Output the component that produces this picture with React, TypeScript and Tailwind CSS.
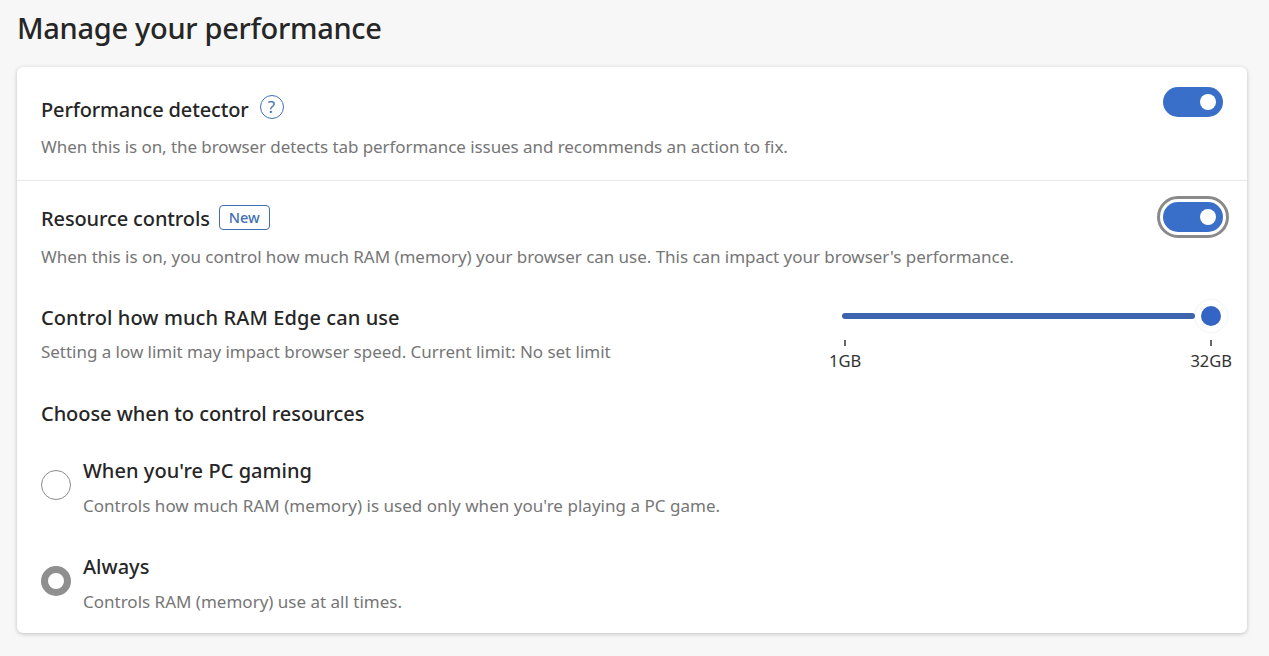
export default function App() {
  return (
    <div className="w-[1269px] h-[656px] overflow-hidden bg-[#f7f7f7] pl-[17px] pr-[22px] font-['Noto_Sans',sans-serif] text-[#262626]">
      <h1 className="h-[67px] pt-[8px] text-[29px] leading-[40px] font-medium tracking-[-0.3px]">Manage your performance</h1>

      <div className="h-[566px] rounded-[6px] bg-white shadow-[0_1px_4px_rgba(0,0,0,0.22)]">
        {/* Performance detector */}
        <div className="h-[114px] border-b border-[#e8e8e8] px-[24px] pt-[20px]">
          <div className="flex justify-between">
            <div className="flex items-center h-[46px] gap-[11px]">
              <span className="text-[20px] font-medium leading-[28px] tracking-[-0.15px]">Performance detector</span>
              <span className="flex h-[24px] w-[24px] mb-[7px] items-center justify-center rounded-full border-[1.5px] border-[#3f6fb5] text-[17px] leading-none text-[#3f6fb5]">?</span>
            </div>
            <Toggle />
          </div>
          <p className="mt-[2px] text-[17px] leading-[24px] tracking-[-0.07px] text-[#767676]">When this is on, the browser detects tab performance issues and recommends an action to fix.</p>
        </div>

        {/* Resource controls */}
        <div className="px-[24px] pt-[20px]">
          <div className="flex justify-between">
            <div className="flex items-center h-[36px] gap-[9px]">
              <span className="text-[20px] font-medium leading-[28px] tracking-[-0.12px]">Resource controls</span>
              <span className="mb-[4px] rounded-[4px] border border-[#3f6fb5] px-[9px] text-[14.5px] leading-[23px] font-medium text-[#3f6fb5]">New</span>
            </div>
            <div className="self-start rounded-full border-[3px] border-[#8a8a8a] p-[3px] -mr-[6px] -mt-[5px]">
              <Toggle />
            </div>
          </div>
          <p className="mt-[7px] text-[17px] leading-[24px] tracking-[-0.035px] text-[#767676]">When this is on, you control how much RAM (memory) your browser can use. This can impact your browser's performance.</p>
        </div>

        {/* RAM limit */}
        <div className="flex justify-between pl-[24px] pr-[15px] pt-[31px]">
          <div>
            <div className="text-[20px] font-medium leading-[36px] tracking-[0.1px]">Control how much RAM Edge can use</div>
            <p className="-mt-[1px] text-[17px] leading-[34px] tracking-[-0.03px] text-[#767676]">Setting a low limit may impact browser speed. Current limit: No set limit</p>
          </div>
          <Slider />
        </div>

        <div className="px-[24px] pt-[28px] text-[20px] font-medium leading-[28px] tracking-[-0.06px]">Choose when to control resources</div>

        <div className="flex gap-[12px] px-[24px] pt-[29px]">
          <span className="mt-[13px] h-[30px] w-[30px] shrink-0 rounded-full border border-[#8a8a8a]" />
          <div>
            <div className="text-[20px] font-medium leading-[28px] tracking-[0.05px]">When you're PC gaming</div>
            <p className="pt-[9px] text-[17px] leading-[24px] tracking-[0.03px] text-[#767676]">Controls how much RAM (memory) is used only when you're playing a PC game.</p>
          </div>
        </div>

        <div className="flex gap-[12px] px-[24px] pt-[35px]">
          <span className="mt-[13px] h-[30px] w-[30px] shrink-0 rounded-full border-[7.5px] border-[#8f8f8f]" />
          <div>
            <div className="text-[20px] font-medium leading-[28px]">Always</div>
            <p className="pt-[9px] text-[17px] leading-[24px] text-[#767676]">Controls RAM (memory) use at all times.</p>
          </div>
        </div>
      </div>
    </div>
  );
}

function Toggle() {
  return (
    <div className="flex h-[30px] w-[60px] items-center justify-end rounded-full bg-[#3a6fc9] pr-[7px]">
      <span className="h-[16px] w-[16px] rounded-full bg-white" />
    </div>
  );
}

function Slider() {
  return (
    <div className="w-[403px] -mt-[4px]">
      <div className="flex h-[40px] items-center pl-[13px] pr-[11px]">
        <div className="h-[6px] flex-1 rounded-full bg-[#3d64ad]" />
        <span className="ml-[6px] h-[20px] w-[20px] rounded-full bg-[#3565c4] shadow-[0_0_0_6px_white,0_0_2px_7px_rgba(0,0,0,0.05)]" />
      </div>
      <div className="flex justify-between text-[16.5px] leading-[22px] text-[#333]">
        <div className="flex flex-col items-center">
          <span className="mt-[4px] h-[6px] w-[2px] bg-[#666]" />
          <span className="mt-[4px]">1GB</span>
        </div>
        <div className="flex flex-col items-center">
          <span className="mt-[4px] h-[6px] w-[2px] bg-[#666]" />
          <span className="mt-[4px]">32GB</span>
        </div>
      </div>
    </div>
  );
}
